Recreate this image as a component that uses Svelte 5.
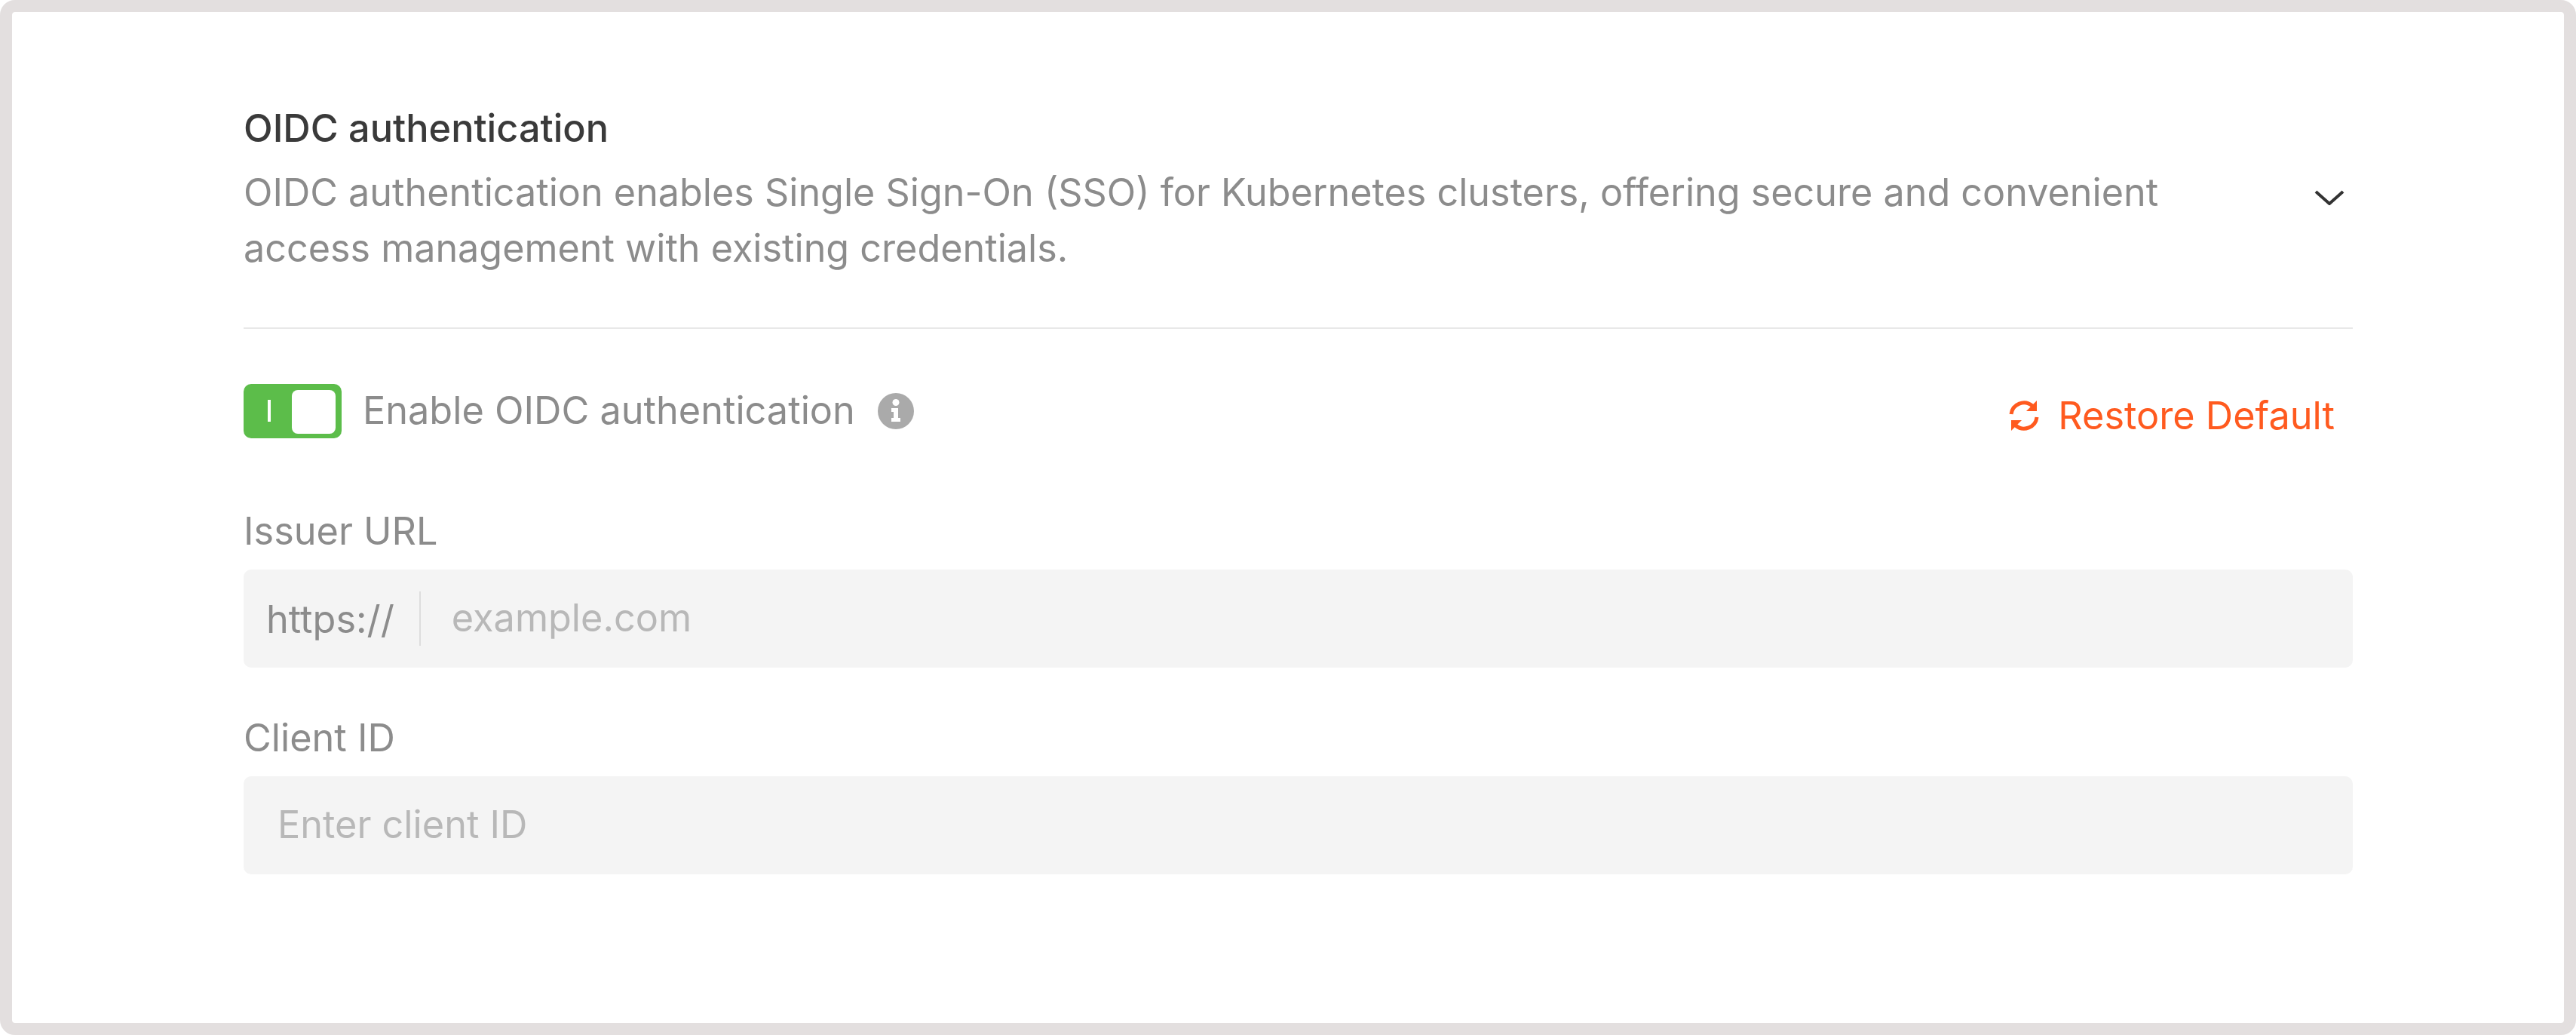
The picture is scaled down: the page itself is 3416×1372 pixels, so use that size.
<script>
  let enabled = true;
  let issuer = "";
  let clientId = "";
</script>

<div class="page">
  <section class="panel">
    <header class="head">
      <div class="head-text">
        <h2 class="title">OIDC authentication</h2>
        <p class="desc">OIDC authentication enables Single Sign-On (SSO) for Kubernetes clusters, offering secure and convenient access management with existing credentials.</p>
      </div>
      <svg class="chevron" viewBox="0 0 40 20" width="40" height="20" aria-hidden="true">
        <path d="M2 2 L20 18 L38 2" fill="none" stroke="#333" stroke-width="4" />
      </svg>
    </header>

    <div class="toggle-row">
      <div class="toggle-group">
        <button class="toggle" class:on={enabled} on:click={() => (enabled = !enabled)} aria-label="Enable OIDC authentication">
          <span class="bar"></span>
          <span class="knob"></span>
        </button>
        <span class="label">Enable OIDC authentication</span>
        <svg class="info" viewBox="0 0 48 48" width="48" height="48" aria-hidden="true">
          <circle cx="24" cy="24" r="24" fill="#aaaaaa" />
          <circle cx="24" cy="12.5" r="4.5" fill="#fff" />
          <path d="M18 20 H27 V33 H30 V38 H18 V33 H21 V25 H18 Z" fill="#fff" />
        </svg>
      </div>
      <button class="restore">
        <svg viewBox="0 0 40 40" width="40" height="40" aria-hidden="true">
          <path d="M3 18 A17 17 0 0 1 31 7" fill="none" stroke="#ff5a1f" stroke-width="5" />
          <path d="M37 22 A17 17 0 0 1 9 33" fill="none" stroke="#ff5a1f" stroke-width="5" />
          <path d="M37 0 V14 H23 Z" fill="#ff5a1f" />
          <path d="M3 40 V26 H17 Z" fill="#ff5a1f" />
        </svg>
        <span>Restore Default</span>
      </button>
    </div>

    <label class="field">
      <span class="field-label">Issuer URL</span>
      <span class="input-wrap">
        <span class="prefix">https://</span>
        <input class="input with-prefix" placeholder="example.com" bind:value={issuer} />
      </span>
    </label>

    <label class="field">
      <span class="field-label">Client ID</span>
      <span class="input-wrap">
        <input class="input" placeholder="Enter client ID" bind:value={clientId} />
      </span>
    </label>
  </section>
</div>

<style>
  :global(body) {
    margin: 0;
    background: #fff;
  }

  .page {
    width: 3416px;
    height: 1372px;
    box-sizing: border-box;
    border: 16px solid #e3dfdf;
    border-radius: 20px;
    padding: 118px 280px 0 307px;
    font-family: Inter, "Liberation Sans", sans-serif;
    background: #fff;
  }

  .panel {
    display: flex;
    flex-direction: column;
  }

  .head {
    display: flex;
    align-items: flex-start;
    justify-content: space-between;
    padding-bottom: 68px;
    border-bottom: 2px solid #e8e8e8;
  }

  .head-text {
    width: 2640px;
  }

  .title {
    margin: 0 0 12px;
    font-size: 50.4px;
    line-height: 72px;
    font-weight: 500;
    color: #3a3a3a;
  }

  .desc {
    margin: 0;
    font-size: 50.28px;
    line-height: 74px;
    color: #8c8c8c;
  }

  .chevron {
    margin: 118px 11px 0 0;
  }

  .toggle-row {
    display: flex;
    justify-content: space-between;
    padding: 72px 0 30px;
  }

  .toggle-group {
    display: flex;
    align-items: center;
    gap: 28px;
  }

  .toggle {
    position: relative;
    width: 130px;
    height: 72px;
    padding: 0;
    border: none;
    border-radius: 10px;
    background: #bbb;
  }

  .toggle.on {
    background: #5cbd4a;
  }

  .bar {
    position: absolute;
    left: 32px;
    top: 21px;
    width: 4px;
    height: 29px;
    background: #fff;
  }

  .knob {
    position: absolute;
    right: 8px;
    top: 8px;
    width: 58px;
    height: 58px;
    border-radius: 8px;
    background: #fff;
  }

  .label {
    font-size: 50.4px;
    color: #8c8c8c;
    padding-bottom: 2px;
  }

  .info {
    margin-left: 2px;
  }

  .restore {
    display: flex;
    align-items: center;
    gap: 25px;
    margin: 12px 24px 0 0;
    padding: 0;
    border: none;
    background: none;
    font: inherit;
    font-size: 50.4px;
    color: #ff5a1f;
  }

  .field {
    display: flex;
    flex-direction: column;
    gap: 14px;
    margin-top: 56px;
  }

  .field-label {
    font-size: 50.4px;
    line-height: 74px;
    color: #8c8c8c;
  }

  .input-wrap {
    display: flex;
    align-items: center;
    height: 130px;
    border-radius: 10px;
    background: #f4f4f4;
  }

  .prefix {
    display: flex;
    align-items: center;
    height: 72px;
    padding: 0 33px 0 30px;
    border-right: 2px solid #ddd;
    font-size: 50.4px;
    color: #8c8c8c;
  }

  .input {
    flex: 1;
    min-width: 0;
    padding: 0 45px 3px;
    border: none;
    outline: none;
    background: none;
    font: inherit;
    font-size: 50.4px;
    color: #333;
  }

  .input.with-prefix {
    padding-left: 41px;
  }

  .input::placeholder {
    color: #b8b8b8;
    opacity: 1;
  }
</style>
